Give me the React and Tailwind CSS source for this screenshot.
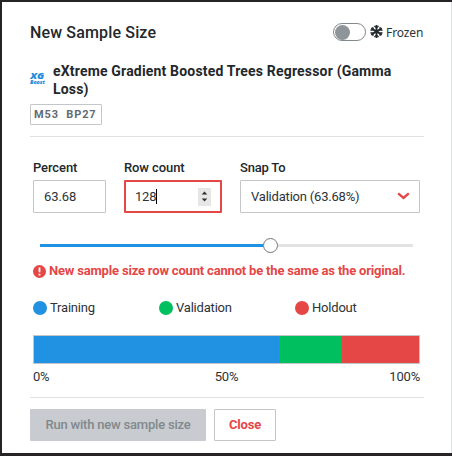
import React from 'react';

function Toggle() {
  return (
    <button className="flex h-[18px] w-[33px] items-center rounded-full border border-[#81898d] bg-white pl-px">
      <span className="h-[15px] w-[15px] rounded-full bg-[#8e9599]" />
    </button>
  );
}

function Snowflake() {
  return (
    <svg width="13" height="13" viewBox="0 0 13 13" fill="none" stroke="#22282b" strokeWidth="1.8" className="mt-[-2px] ml-[4px] shrink-0">
      <path d="M6.5 0v13M1.1 3.4l10.8 6.2M11.9 3.4L1.1 9.6" />
      <path d="M4.4 1l2.1 1.9L8.6 1M4.4 12l2.1-1.9L8.6 12M0.5 5.3l2.8-.6-.6-2.7M12.5 7.7l-2.8.6.6 2.7M12.5 5.3l-2.8-.6.6-2.7M0.5 7.7l2.8.6-.6 2.7" strokeWidth="1.2" />
    </svg>
  );
}

function Legend({ color, label, width }) {
  return (
    <div className={`flex shrink-0 items-center gap-[3px] ${width}`}>
      <span className={`h-[14px] w-[14px] shrink-0 rounded-full ${color}`} />
      <span>{label}</span>
    </div>
  );
}

export default function App() {
  return (
    <div className="h-[456px] w-[452px] overflow-hidden border-t-2 border-b-[3px] border-l-2 border-[#262425] bg-white font-[Roboto,sans-serif] text-[13px] tracking-[-0.2px] text-[#2d3337]">
      <div className="flex h-full flex-col border-r border-[#dfe0e1] pr-[27px] pl-[28px]">
        <header className="mt-[14px] flex h-[32px] items-center">
          <h1 className="mt-[2px] flex-1 text-[16px] font-medium tracking-[0.15px] whitespace-nowrap text-[#22282b]">New Sample Size</h1>
          <Toggle />
          <Snowflake />
          <span className="mt-px ml-[3px] w-[38px] font-['Noto_Sans',sans-serif] text-[12px] tracking-[-0.1px] whitespace-nowrap">Frozen</span>
        </header>

        <section className="mt-[14px] flex h-[36px] items-center">
          <svg width="16" height="24" viewBox="0 0 16 24" className="mr-[7px] shrink-0 overflow-visible font-['Open_Sans',sans-serif] font-extrabold tracking-normal italic" fill="#1c8bd9">
            <text x="0.3" y="10.9" fontSize="9.3" textLength="14" lengthAdjust="spacingAndGlyphs">XG</text>
            <text x="0" y="16" fontSize="5" textLength="15" lengthAdjust="spacingAndGlyphs">Boost</text>
          </svg>
          <h2 className="text-[14px] leading-[18px] font-bold tracking-[0.18px] whitespace-nowrap text-[#22282b]">
            eXtreme Gradient Boosted Trees Regressor (Gamma<br />Loss)
          </h2>
        </section>
        <div className="mt-[6px] flex h-[21px] w-[72px] items-center rounded-[1px] border border-[#c4c7ca] pt-px pl-[3px] text-[11px] font-bold tracking-[0.9px] whitespace-pre text-[#626b70]">M53  BP27</div>
        <div className="mt-[11px] h-px shrink-0 bg-[#dfe1e2]" />

        <div className="mt-[23px] flex h-[54px] shrink-0 pl-[3px]">
          <label className="mr-[18px] flex w-[73px] flex-col">
            <span className="h-[20px] leading-[16px] font-medium tracking-[-0.1px] text-[#22282b]">Percent</span>
            <span className="flex h-[33px] items-center rounded-[1px] border border-[#c4c7ca] pl-[10px] tracking-[-0.1px]">63.68</span>
          </label>
          <label className="mr-[18px] flex w-[98px] flex-col">
            <span className="h-[20px] leading-[16px] font-medium tracking-[-0.1px] text-[#22282b]">Row count</span>
            <span className="flex h-[33px] items-center rounded-[1px] border-2 border-[#e54646] pr-[9px] pl-[9px]">
              <span className="tracking-[-0.2px]">128</span>
              <span className="h-[15px] w-px bg-black" />
              <span className="ml-auto flex h-[18px] w-[13px] items-center justify-center bg-[#e6e6e6]">
                <svg width="7" height="11" viewBox="0 0 7 11" fill="#303030"><path d="M.7 3.5L3.5.5l2.8 3zM.7 7.5l2.8 3 2.8-3z" /></svg>
              </span>
            </span>
          </label>
          <label className="flex w-[180px] flex-col">
            <span className="h-[20px] leading-[16px] font-medium tracking-[-0.2px] text-[#22282b]">Snap To</span>
            <span className="flex h-[33px] items-center justify-between rounded-[1px] border border-[#c4c7ca] pr-[9px] pl-[10px]">
              <span>Validation (63.68%)</span>
              <svg width="13" height="8" viewBox="0 0 13 8" fill="none" stroke="#e54646" strokeWidth="2.4" className="mt-[-1px]"><path d="M1.2 1.3l5.3 4.7 5.3-4.7" /></svg>
            </span>
          </label>
        </div>

        <div className="mt-[24px] flex h-[15px] shrink-0 items-center pl-[10px]">
          <span className="h-[3px] w-[223px] bg-[#2191e1]" />
          <span className="h-[15px] w-[15px] rounded-full border border-[#70777b] bg-white" />
          <span className="h-[3px] w-[135px] bg-[#e3e3e3]" />
        </div>

        <div className="mt-[10px] flex h-[16px] shrink-0 items-center pl-[3px] font-bold tracking-[-0.18px] whitespace-nowrap text-[#e54646]">
          <svg width="13" height="13" viewBox="0 0 13 13" className="mr-[3px] shrink-0">
            <circle cx="6.5" cy="6.5" r="6.5" fill="#e54646" />
            <path d="M6.5 2.5v4.7M6.5 8.7v1.8" stroke="white" strokeWidth="1.8" />
          </svg>
          New sample size row count cannot be the same as the original.
        </div>

        <div className="mt-[21px] flex h-[16px] shrink-0 pl-[3px]">
          <Legend color="bg-[#2191e1]" label="Training" width="w-[126px]" />
          <Legend color="bg-[#00bf5f]" label="Validation" width="w-[136px]" />
          <Legend color="bg-[#e54646]" label="Holdout" width="w-[100px]" />
        </div>

        <div className="mt-[19px] ml-[3px] flex h-[29px] w-[387px] shrink-0 border border-[#c4c7ca]">
          <div className="w-[245px] bg-[#2191e1]" />
          <div className="w-[63px] bg-[#00bf5f]" />
          <div className="flex-1 bg-[#e54646]" />
        </div>
        <div className="mt-[5px] ml-[3px] flex h-[16px] w-[387px] shrink-0 items-center justify-between">
          <span className="w-[30px]">0%</span><span>50%</span><span className="flex w-[30px] justify-end whitespace-nowrap">100%</span>
        </div>

        <div className="mt-[12px] h-px shrink-0 bg-[#dfe1e2]" />
        <div className="mt-[11px] flex h-[32px] shrink-0 gap-[8px]">
          <button className="w-[176px] rounded-[1px] bg-[#c8cbcf] font-medium whitespace-nowrap text-[#81898d]">Run with new sample size</button>
          <button className="w-[62px] rounded-[1px] border border-[#c4c7ca] font-bold text-[#e54646]">Close</button>
        </div>
      </div>
    </div>
  );
}
